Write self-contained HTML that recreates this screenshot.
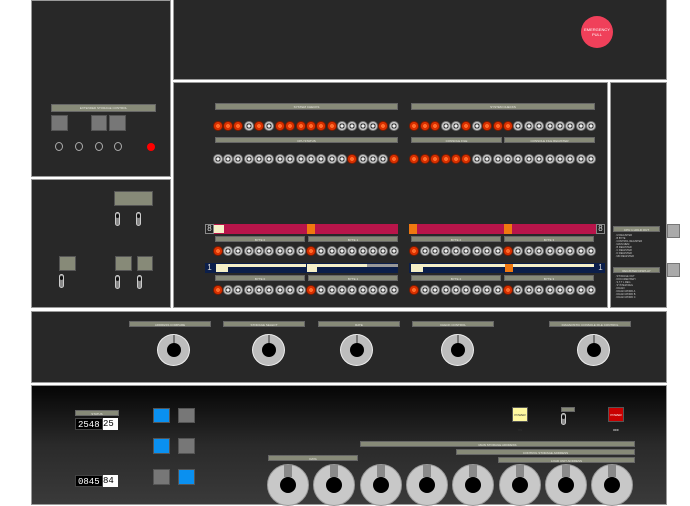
<!DOCTYPE html>
<html><head><meta charset="utf-8">
<style>
*{margin:0;padding:0;box-sizing:border-box}
body{width:690px;height:500px;background:#fff;position:relative;overflow:hidden;font-family:"Liberation Sans",sans-serif}
.p{position:absolute;background:#282828;border:1px solid #9a9a9a}
.a{position:absolute}
.bar{position:absolute;background:#878a78;color:#e8e8e0;font-size:3px;text-align:center;line-height:6px;border:1px solid #666}
.lamp{position:absolute;width:10px;height:10px;border-radius:50%;background:radial-gradient(circle,#f0f0f0 0 1.5px,#333 1.6px 2.6px,#c8c8c8 2.7px 4px,#777 4.1px)}
.lamp.r{background:radial-gradient(circle,#ff6a2a 0 2px,#d83000 2.1px 4px,#7a1a00 4.1px)}
.sq{position:absolute;border:1px solid #555}
.tog{position:absolute;width:5px;height:14px;background:#888;border-radius:3px;border:1px solid #ccc}
.tog:after{content:"";position:absolute;left:0;top:1px;width:3px;height:4px;background:#111;border-radius:2px}
.knob{position:absolute;width:33px;height:32px;border-radius:50%;background:#bdbdbd;border:1px solid #eee}
.knob:after{content:"";position:absolute;left:9px;top:8px;width:14px;height:14px;border-radius:50%;background:#000}
.knob:before{content:"";position:absolute;left:15px;top:0;width:2px;height:9px;background:#777}
.dial{position:absolute;width:42px;height:42px;border-radius:50%;background:#c8c8c8;border:1px solid #999;color:#333;font-size:5px}
.dial:after{content:"";position:absolute;left:12px;top:12px;width:16px;height:16px;border-radius:50%;background:#000}
.dial:before{content:"";position:absolute;left:16px;top:0;width:8px;height:12px;background:#8a8a8a}
.t{position:absolute;color:#ccc;font-size:2.5px;line-height:3px}
</style></head><body>
<div class="p" style="left:31px;top:0;width:140px;height:177px"></div>
<div class="p" style="left:31px;top:179px;width:140px;height:129px"></div>
<div class="p" style="left:173px;top:-1px;width:494px;height:81px"></div>
<div class="p" style="left:173px;top:82px;width:435px;height:226px"></div>
<div class="p" style="left:610px;top:82px;width:57px;height:226px"></div>
<div class="p" style="left:31px;top:311px;width:636px;height:72px"></div>
<div class="p" style="left:31px;top:385px;width:636px;height:120px;background:linear-gradient(#050505,#2a2a2a 50%,#3a3a3a)"></div>
<div class="a" style="left:667px;top:224px;width:13px;height:14px;background:#aaa;border:1px solid #777"></div>
<div class="a" style="left:667px;top:263px;width:13px;height:14px;background:#aaa;border:1px solid #777"></div>

<div class="a" style="left:581px;top:16px;width:32px;height:32px;border-radius:50%;background:#f0405a;color:#fff;font-size:4px;text-align:center;padding-top:11px;line-height:5px">EMERGENCY<br>PULL</div>

<div class="bar" style="left:51px;top:104px;width:105px;height:8px">EXTENDED STORAGE CONTROL</div>
<div class="sq" style="left:51px;top:115px;width:17px;height:16px;background:#777"></div>
<div class="sq" style="left:91px;top:115px;width:16px;height:16px;background:#777"></div>
<div class="sq" style="left:109px;top:115px;width:17px;height:16px;background:#777"></div>
<div class="a" style="left:55px;top:142px;width:8px;height:9px;border-radius:50%;border:1px solid #aaa"></div>
<div class="a" style="left:75px;top:142px;width:8px;height:9px;border-radius:50%;border:1px solid #aaa"></div>
<div class="a" style="left:95px;top:142px;width:8px;height:9px;border-radius:50%;border:1px solid #aaa"></div>
<div class="a" style="left:114px;top:142px;width:8px;height:9px;border-radius:50%;border:1px solid #aaa"></div>
<div class="a" style="left:147px;top:143px;width:8px;height:8px;border-radius:50%;background:#f00"></div>

<div class="sq" style="left:114px;top:191px;width:39px;height:15px;background:#878a78"></div>
<div class="tog" style="left:115px;top:212px"></div>
<div class="tog" style="left:136px;top:212px"></div>
<div class="sq" style="left:59px;top:256px;width:17px;height:15px;background:#878a78"></div>
<div class="sq" style="left:115px;top:256px;width:17px;height:15px;background:#878a78"></div>
<div class="sq" style="left:137px;top:256px;width:16px;height:15px;background:#878a78"></div>
<div class="tog" style="left:59px;top:274px"></div>
<div class="tog" style="left:115px;top:275px"></div>
<div class="tog" style="left:137px;top:275px"></div>

<div class="bar" style="left:215px;top:103px;width:183px;height:7px">SYSTEM CHECKS</div>
<div class="bar" style="left:411px;top:103px;width:184px;height:7px">SYSTEM CHECKS</div>
<div class="bar" style="left:215px;top:137px;width:183px;height:6px">CPU STATUS</div>
<div class="bar" style="left:411px;top:137px;width:91px;height:6px">CONSOLE FILE</div>
<div class="bar" style="left:504px;top:137px;width:91px;height:6px">CONSOLE FILE REGISTER</div>

<div class="a" style="left:205px;top:224px;width:193px;height:10px;background:#b8154a"></div>
<div class="a" style="left:205px;top:224px;width:9px;height:10px;background:#222;border:1px solid #888;color:#ddd;font-size:8px;line-height:8px;text-align:center">8</div>
<div class="a" style="left:214px;top:225px;width:10px;height:8px;background:#f5f0c8"></div>
<div class="a" style="left:307px;top:224px;width:8px;height:10px;background:#f07810"></div>
<div class="a" style="left:409px;top:224px;width:188px;height:10px;background:#b8154a"></div>
<div class="a" style="left:409px;top:224px;width:8px;height:10px;background:#f07810"></div>
<div class="a" style="left:504px;top:224px;width:8px;height:10px;background:#f07810"></div>
<div class="a" style="left:596px;top:224px;width:9px;height:10px;background:#222;border:1px solid #888;color:#ddd;font-size:8px;line-height:8px;text-align:center">8</div>

<div class="a" style="left:205px;top:263px;width:193px;height:10px;background:#0c1f4a"></div>
<div class="a" style="left:205px;top:263px;width:9px;height:10px;color:#ddd;font-size:8px;line-height:10px;text-align:center">1</div>
<div class="a" style="left:216px;top:264px;width:90px;height:3px;background:#f5f0c8"></div>
<div class="a" style="left:307px;top:264px;width:60px;height:3px;background:#f5f0c8"></div>
<div class="a" style="left:367px;top:264px;width:31px;height:3px;background:#999"></div>
<div class="a" style="left:216px;top:267px;width:12px;height:5px;background:#f5f0c8"></div>
<div class="a" style="left:307px;top:267px;width:10px;height:5px;background:#f5f0c8"></div>
<div class="a" style="left:409px;top:263px;width:196px;height:10px;background:#0c1f4a"></div>
<div class="a" style="left:411px;top:264px;width:183px;height:3px;background:#f5f0c8"></div>
<div class="a" style="left:411px;top:267px;width:12px;height:5px;background:#f5f0c8"></div>
<div class="a" style="left:505px;top:264px;width:8px;height:8px;background:#f07810"></div>
<div class="a" style="left:596px;top:263px;width:9px;height:10px;color:#ddd;font-size:8px;line-height:10px;text-align:center">1</div>

<div id="L"></div>

<div class="bar" style="left:613px;top:226px;width:47px;height:6px">CPU 1 HOLD OUT</div>
<div class="t" style="left:615px;top:234px">&middot; M REGISTER<br>&middot; B BYTE<br>&middot; CONTROL REGISTER<br>&middot; MAIN MEM<br>&middot; B REGISTER<br>&middot; C REGISTER<br>&middot; D REGISTER<br>&middot; MD REGISTER</div>
<div class="bar" style="left:613px;top:267px;width:47px;height:6px">REGISTER DISPLAY</div>
<div class="t" style="left:615px;top:275px">&middot; STORAGE OUT<br>&middot; DOCUMENTARY<br>&middot; S,T,T L REG<br>&middot; SYSTEM REG<br>&middot; DIAGN<br>&middot; DIAGN WORD A<br>&middot; DIAGN WORD B<br>&middot; DIAGN WORD C</div>

<div class="bar" style="left:129px;top:321px;width:82px;height:6px">ADDRESS COMPARE</div>
<div class="bar" style="left:223px;top:321px;width:82px;height:6px">STORAGE SELECT</div>
<div class="bar" style="left:318px;top:321px;width:82px;height:6px">RATE</div>
<div class="bar" style="left:412px;top:321px;width:82px;height:6px">CHECK CONTROL</div>
<div class="bar" style="left:549px;top:321px;width:82px;height:6px">DIAGNOSTIC CONSOLE FILE CONTROL</div>
<div class="knob" style="left:157px;top:334px"></div>
<div class="knob" style="left:252px;top:334px"></div>
<div class="knob" style="left:340px;top:334px"></div>
<div class="knob" style="left:441px;top:334px"></div>
<div class="knob" style="left:577px;top:334px"></div>

<div class="bar" style="left:75px;top:410px;width:44px;height:6px">STATUS</div>
<div class="a" style="left:75px;top:418px;width:28px;height:12px;background:#000;color:#fff;font:9px 'Liberation Mono',monospace;line-height:12px;padding-left:2px;border:1px solid #444">2548</div>
<div class="a" style="left:103px;top:418px;width:15px;height:12px;background:#fff;color:#000;font:9px 'Liberation Mono',monospace;line-height:12px">25</div>
<div class="a" style="left:75px;top:475px;width:28px;height:12px;background:#000;color:#fff;font:9px 'Liberation Mono',monospace;line-height:12px;padding-left:2px;border:1px solid #444">0845</div>
<div class="a" style="left:103px;top:475px;width:15px;height:12px;background:#fff;color:#000;font:9px 'Liberation Mono',monospace;line-height:12px">84</div>
<div class="sq" style="left:153px;top:408px;width:17px;height:15px;background:#0a90f0"></div>
<div class="sq" style="left:178px;top:408px;width:17px;height:15px;background:#777"></div>
<div class="sq" style="left:153px;top:438px;width:17px;height:16px;background:#0a90f0"></div>
<div class="sq" style="left:178px;top:438px;width:17px;height:16px;background:#777"></div>
<div class="sq" style="left:153px;top:469px;width:17px;height:16px;background:#777"></div>
<div class="sq" style="left:178px;top:469px;width:17px;height:16px;background:#0a90f0"></div>
<div class="sq" style="left:512px;top:407px;width:16px;height:15px;background:#fff9a0;color:#333;font-size:3px;line-height:15px;text-align:center">POWER ON</div>
<div class="bar" style="left:561px;top:407px;width:14px;height:5px"></div>
<div class="tog" style="left:561px;top:413px;height:12px"></div>
<div class="sq" style="left:608px;top:407px;width:16px;height:15px;background:#c80000;color:#fff;font-size:3px;line-height:15px;text-align:center">POWER OFF</div>
<div class="bar" style="left:360px;top:441px;width:275px;height:6px">MAIN STORAGE ADDRESS</div>
<div class="bar" style="left:456px;top:449px;width:179px;height:6px">CONTROL STORAGE ADDRESS</div>
<div class="bar" style="left:498px;top:457px;width:137px;height:6px">LOAD UNIT ADDRESS</div>
<div class="bar" style="left:268px;top:455px;width:90px;height:6px">DATA</div>
<div id="D"></div>

<script>
var L=document.getElementById('L'),h='';
function lamp(x,y,r){h+='<div class="lamp'+(r?' r':'')+'" style="left:'+(x-5)+'px;top:'+(y-5)+'px"></div>';}
var r1l='RRRGRGRRRRRRGGGGRG',r1r='RRRGGRGRRRGGGGGGGG',r2l='GGGGGGGGGGGGGRGGGR',r2r='RRRRRRGGGGGGGGGGGG';
for(var i=0;i<18;i++){
 var xl=217.7+i*10.35,xr=414.3+i*10.4;
 lamp(xl,126,r1l[i]=='R');lamp(xr,126,r1r[i]=='R');
 lamp(xl,159,r2l[i]=='R');lamp(xr,159,r2r[i]=='R');
 var b=(i%9==0);
 lamp(xl,251,b);lamp(xr,251,b);
 lamp(xl,290,b);lamp(xr,290,b);
}
[[215,236],[308,236],[411,236],[504,236],[215,275],[308,275],[411,275],[504,275]].forEach(function(p,k){h+='<div class="bar" style="left:'+p[0]+'px;top:'+p[1]+'px;width:90px;height:6px">BYTE '+(k%4)+'</div>';});
L.innerHTML=h;
var D='';for(var j=0;j<8;j++){D+='<div class="dial" style="left:'+(267+j*46.3)+'px;top:464px"></div>';}
document.getElementById('D').innerHTML=D;
</script>
</body></html>
